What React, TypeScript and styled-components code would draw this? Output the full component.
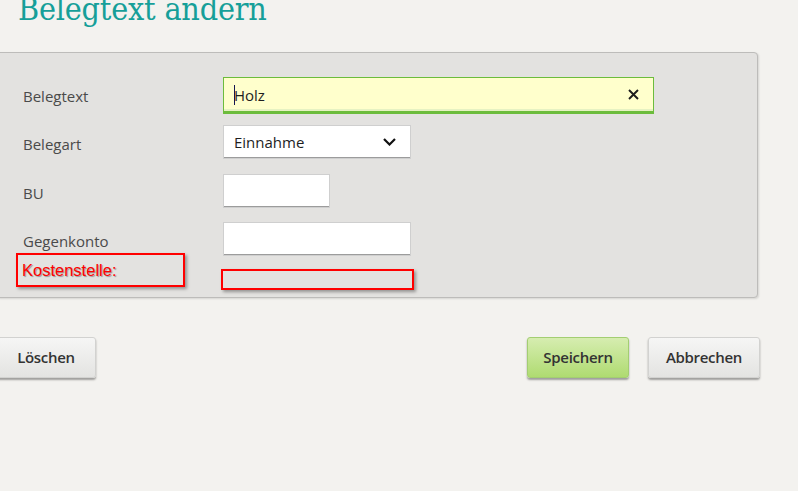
import React from 'react';
import styled, { createGlobalStyle } from 'styled-components';

const GlobalStyle = createGlobalStyle`
  html, body {
    margin: 0;
    padding: 0;
    background: #f3f2ef;
    overflow: hidden;
  }
`;

const Page = styled.div`
  width: 798px;
  height: 491px;
  font-family: "Open Sans", "Noto Sans", sans-serif;
`;

const Title = styled.h1`
  margin: -7px 0 0 0;
  padding-left: 18px;
  height: 59px;
  font-family: "DejaVu Serif", serif;
  font-stretch: condensed;
  font-weight: normal;
  font-size: 32px;
  line-height: 32px;
  color: #169f99;
  letter-spacing: -0.2px;
`;

const Panel = styled.section`
  margin-left: -4px;
  width: 762px;
  box-sizing: border-box;
  height: 246px;
  padding: 24px 0 0 26px;
  background: #e3e2e0;
  border: 1px solid #bdbcba;
  border-radius: 4px;
  box-shadow: 1px 1px 2px rgba(0, 0, 0, 0.12);
  display: flex;
  flex-direction: column;
`;

const Row = styled.div<{ $gap: number }>`
  display: flex;
  align-items: center;
  margin-top: ${(p) => p.$gap}px;
`;

const Label = styled.label`
  width: 200px;
  padding-top: 3px;
  font-size: 15px;
  color: #4a4a4a;
`;

const TextBox = styled.div<{ $w: number; $active?: boolean }>`
  width: ${(p) => p.$w}px;
  height: 34px;
  box-sizing: border-box;
  display: flex;
  align-items: center;
  justify-content: space-between;
  padding: 0 14px 0 10px;
  font-size: 15px;
  color: #1e1e1e;
  background: ${(p) => (p.$active ? '#ffffcc' : '#ffffff')};
  border: 1px solid ${(p) => (p.$active ? '#6cbc3c' : '#cfcfcf')};
  box-shadow: ${(p) =>
    p.$active ? '0 2px 0 #6cbc3c, inset 0 -2px 0 #e6f2c2' : 'inset 0 -1px 0 #9c9c9c'};
`;

const Caret = styled.span`
  display: inline-block;
  width: 1px;
  height: 20px;
  background: #151550;
  vertical-align: middle;
  margin-right: -1px;
`;

const Value = styled.span`
  display: flex;
  align-items: center;
`;

const NoteRow = styled.div`
  display: flex;
  align-items: flex-start;
  margin-top: -3px;
`;

const NoteLabel = styled.div`
  margin-left: -7px;
  width: 169px;
  height: 34px;
  box-sizing: border-box;
  border: 2px solid #ff0000;
  box-shadow: 2px 2px 3px rgba(0, 0, 0, 0.35);
  padding: 6px 0 0 4px;
  font-family: "Liberation Sans", Arial, sans-serif;
  font-size: 16.5px;
  line-height: 18px;
  color: #ff0000;
  text-shadow: 1px 1px 1px rgba(0, 0, 0, 0.35);
`;

const NoteField = styled.div`
  margin: 16px 0 0 36px;
  width: 193px;
  height: 21px;
  box-sizing: border-box;
  border: 2px solid #ff0000;
  box-shadow: 2px 2px 3px rgba(0, 0, 0, 0.35);
`;

const Actions = styled.div`
  display: flex;
  align-items: center;
  margin-top: 39px;
  width: 760px;
`;

const Button = styled.button<{ $primary?: boolean; $w: number }>`
  width: ${(p) => p.$w}px;
  height: 41px;
  box-sizing: border-box;
  font-family: "Open Sans", "Noto Sans", sans-serif;
  font-weight: 600;
  font-size: 15px;
  letter-spacing: -0.3px;
  color: #333;
  border-radius: 3px;
  border: 1px solid ${(p) => (p.$primary ? '#a3ce72' : '#d2d2d0')};
  background: ${(p) =>
    p.$primary
      ? 'linear-gradient(#d6edb0, #afdb71)'
      : 'linear-gradient(#f6f6f5, #e3e3e1)'};
  box-shadow: 0 2px 2px rgba(0, 0, 0, 0.35);
  padding: 0 0 2px 0;
`;

const Left = styled.div`
  margin-left: -4px;
  flex: 1;
`;

const Right = styled.div`
  display: flex;
  gap: 19px;
`;

const ClearIcon = () => (
  <svg width="11" height="11" viewBox="0 0 11 11">
    <path d="M1 1 L10 10 M10 1 L1 10" stroke="#1c1c1c" strokeWidth="1.9" />
  </svg>
);

const Chevron = () => (
  <svg width="13" height="8" viewBox="0 0 13 8">
    <path d="M1 1 L6.5 6.5 L12 1" stroke="#111" strokeWidth="2.2" fill="none" />
  </svg>
);

export default function App() {
  return (
    <>
      <GlobalStyle />
      <Page>
        <Title>Belegtext andern</Title>
        <Panel>
          <Row $gap={0}>
            <Label>Belegtext</Label>
            <TextBox $w={431} $active style={{ height: 35 }}>
              <Value>
                <Caret />
                Holz
              </Value>
              <ClearIcon />
            </TextBox>
          </Row>
          <Row $gap={13}>
            <Label>Belegart</Label>
            <TextBox $w={188}>
              <Value>Einnahme</Value>
              <Chevron />
            </TextBox>
          </Row>
          <Row $gap={15}>
            <Label>BU</Label>
            <TextBox $w={107} />
          </Row>
          <Row $gap={14}>
            <Label>Gegenkonto</Label>
            <TextBox $w={188} />
          </Row>
          <NoteRow>
            <NoteLabel>Kostenstelle:</NoteLabel>
            <NoteField />
          </NoteRow>
        </Panel>
        <Actions>
          <Left>
            <Button $w={100}>Löschen</Button>
          </Left>
          <Right>
            <Button $w={102} $primary>
              Speichern
            </Button>
            <Button $w={112}>Abbrechen</Button>
          </Right>
        </Actions>
      </Page>
    </>
  );
}
